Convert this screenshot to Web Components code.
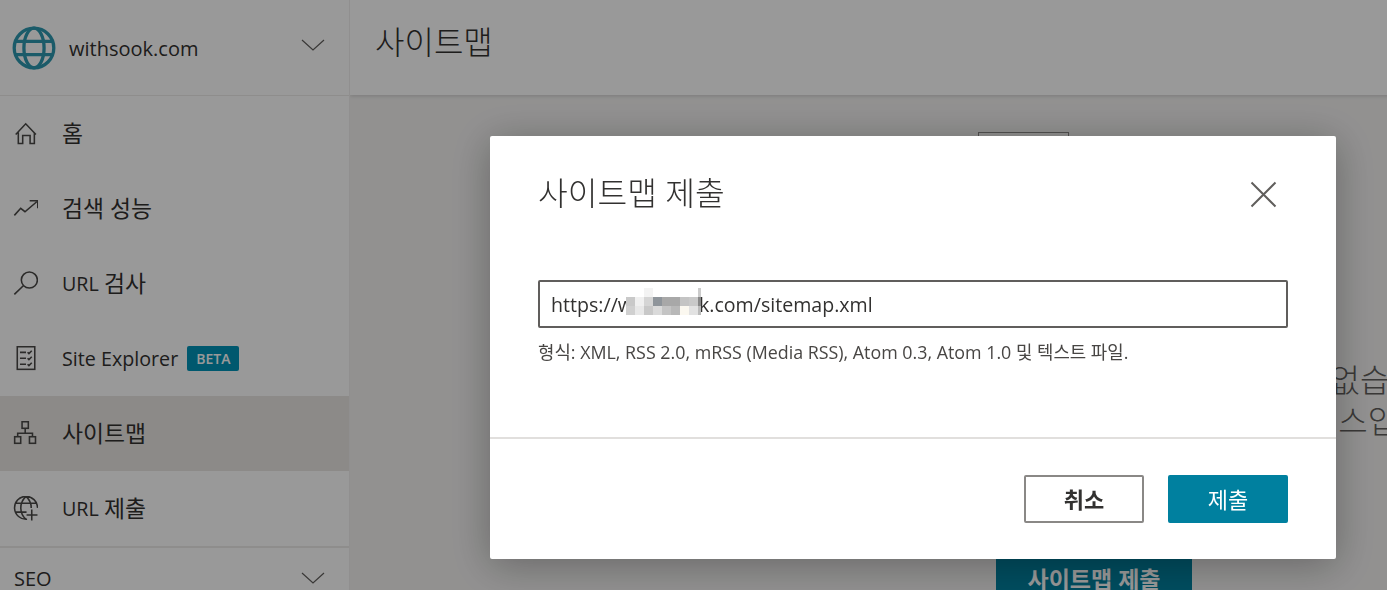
<!DOCTYPE html>
<html lang="ko">
<head>
<meta charset="utf-8">
<title>사이트맵</title>
<style>
    html, body { margin: 0; height: 100%; overflow: hidden; background: #fff; }
    body { font-family: "Open Sans", "Noto Sans CJK KR", sans-serif; color: #323130; }
</style>
</head>
<body>
<app-shell>
    <site-nav slot="nav">
        <nav-item icon="home"><ko-text>홈</ko-text></nav-item>
        <nav-item icon="trend"><ko-text>검색 성능</ko-text></nav-item>
        <nav-item icon="search">URL&nbsp;<ko-text>검사</ko-text></nav-item>
        <nav-item icon="list">Site Explorer<beta-badge>BETA</beta-badge></nav-item>
        <nav-item icon="tree" selected><ko-text>사이트맵</ko-text></nav-item>
        <nav-item icon="globe">URL&nbsp;<ko-text>제출</ko-text></nav-item>
    </site-nav>
    <sitemap-page slot="main"></sitemap-page>
</app-shell>
<submit-dialog></submit-dialog>

<script>
const ICONS = {
    home: '<path d="M2.600 13 12.200 2.700 22 13M5.100 11V21.600H9.300V14H16.400V21.600H20.500V11"/>',
    trend: '<path d="M1.300 18.600 7.400 11.800 11.500 15.100 22.800 5.500M16 4.500H23.800V11.800"/>',
    search: '<circle cx="15.700" cy="8.700" r="7.700"/><path d="M9.900 14.100 1.300 22.400"/>',
    list: '<rect x="4.100" y="0.700" width="16.800" height="21.700"/><path d="M6.700 6.100H12.500M6.700 11.800H12.500M6.700 17.600H12.500M14 6l1.300 1.300L18 4.600M14 11.700l1.300 1.300L18 10.300M14 17.500l1.300 1.300L18 16.100"/>',
    tree: '<rect x="8.700" y="0.700" width="6" height="6.300"/><rect x="1.600" y="15.100" width="5.800" height="6.300"/><rect x="15.800" y="15.100" width="5.800" height="6.300"/><path d="M11.700 7V11.800M4.500 15.100V11.800H18.700V15.100"/>',
    globe: '<path d="M13.500 22.300A11 11 0 1 1 23.500 11.400M12.500 0.400C8.500 4 7.500 8 7.500 11.400S8.500 19 12.500 22.400M12.500 0.400C16.500 4 17.500 8 17.500 11.400M2.500 7H22.500M2.500 15.500H13M13 18.300H23.500M18 13V23.500"/>'
};

class AppShell extends HTMLElement {
    constructor() {
        super();
        this.attachShadow({ mode: 'open' });
    }

    connectedCallback() {
        this.shadowRoot.innerHTML = `
            <style>
                :host { display: flex; height: 100vh; overflow: hidden; }
            </style>
            <slot name="nav"></slot>
            <slot name="main"></slot>
        `;
    }
}

// Korean runs sit a little larger than the latin text around them
class KoText extends HTMLElement {
    constructor() {
        super();
        this.attachShadow({ mode: 'open' });
    }

    connectedCallback() {
        this.shadowRoot.innerHTML = `
            <style>
                :host { display: block; margin-top: -3px; font-size: 1.16em; }
            </style>
            <slot></slot>
        `;
    }
}

class SiteNav extends HTMLElement {
    constructor() {
        super();
        this.attachShadow({ mode: 'open' });
    }

    connectedCallback() {
        this.shadowRoot.innerHTML = `
            <style>
                :host {
                    display: block;
                    flex: 0 0 349px;
                    height: 100vh;
                    overflow: hidden;
                    border-right: 1px solid #f0efee;
                }
                .site {
                    display: flex;
                    align-items: center;
                    box-sizing: border-box;
                    height: 96px;
                    padding: 0 24px 0 12px;
                    border-bottom: 1px solid #edebe9;
                    font-size: 20px;
                }
                .site .logo {
                    width: 44px;
                    height: 44px;
                    margin-right: 13px;
                    fill: none;
                    stroke: #2d98b0;
                    stroke-width: 1.800;
                }
                .site .name { flex: 1; position: relative; top: 1px; }
                .site .chev { margin-bottom: 5px; }
                .chev {
                    width: 24px;
                    height: 14px;
                    fill: none;
                    stroke: #605e5c;
                    stroke-width: 1.200;
                }
                .group {
                    display: flex;
                    align-items: center;
                    justify-content: space-between;
                    height: 60px;
                    padding: 0 24px 0 14px;
                    border-top: 2px solid #edebe9;
                    font-size: 20px;
                }
            </style>
            <div class="site">
                <svg class="logo" viewBox="0 0 24 24">
                    <circle cx="12" cy="12" r="10.800"/>
                    <ellipse cx="12" cy="12" rx="5.500" ry="10.800"/>
                    <path d="M2 8.400H22M2 15.600H22"/>
                </svg>
                <span class="name">withsook.com</span>
                <svg class="chev" viewBox="0 0 24 14"><path d="M1 2 12 12 23 2"/></svg>
            </div>
            <slot></slot>
            <div class="group">
                <span>SEO</span>
                <svg class="chev" viewBox="0 0 24 14"><path d="M1 2 12 12 23 2"/></svg>
            </div>
        `;
    }
}

class NavItem extends HTMLElement {
    constructor() {
        super();
        this.attachShadow({ mode: 'open' });
    }

    connectedCallback() {
        const icon = ICONS[this.getAttribute('icon')];
        this.shadowRoot.innerHTML = `
            <style>
                :host {
                    display: flex;
                    align-items: center;
                    height: 75px;
                    padding-left: 13px;
                    font-size: 19.700px;
                }
                :host([selected]) { background: #e9e7e3; }
                svg {
                    flex: none;
                    width: 25px;
                    height: 25px;
                    margin-right: 24px;
                    fill: none;
                    stroke: #4a4947;
                    stroke-width: 1.500;
                }
                span { display: flex; align-items: center; }
            </style>
            <svg viewBox="0 0 24 24">${icon}</svg>
            <span><slot></slot></span>
        `;
    }
}

class BetaBadge extends HTMLElement {
    constructor() {
        super();
        this.attachShadow({ mode: 'open' });
    }

    connectedCallback() {
        this.shadowRoot.innerHTML = `
            <style>
                :host {
                    display: inline-block;
                    margin-left: 9px;
                    padding: 0 9px;
                    line-height: 25px;
                    height: 25px;
                    border-radius: 2px;
                    background: #0093b7;
                    color: #fff;
                    font-size: 14px;
                    font-weight: 600;
                }
            </style>
            <slot></slot>
        `;
    }
}

class SitemapPage extends HTMLElement {
    constructor() {
        super();
        this.attachShadow({ mode: 'open' });
    }

    connectedCallback() {
        this.shadowRoot.innerHTML = `
            <style>
                :host {
                    display: block;
                    flex: 0 0 1488px;
                    height: 100vh;
                    overflow: hidden;
                    background: #f3f2f1;
                }
                header {
                    height: 95px;
                    padding-left: 25px;
                    background: #fff;
                    box-shadow: 0 1px 4px rgba(0,0,0,0.16);
                    font-size: 32px;
                    font-weight: 300;
                    line-height: 84px;
                }
                .empty {
                    display: flex;
                    flex-direction: column;
                    align-items: center;
                    padding-top: 37px;
                }
                .art {
                    width: 89px;
                    height: 200px;
                    margin-right: 142px;
                    border: 1px solid #8a8886;
                }
                .msg {
                    width: 724px;
                    margin-top: 25px;
                    text-align: right;
                    font-size: 32px;
                    font-weight: 300;
                    line-height: 41px;
                    color: #605e5c;
                }
                .cta {
                    width: 196px;
                    height: 48px;
                    margin-top: 114px;
                    background: #00809f;
                    color: #fff;
                    font-size: 23px;
                    font-weight: 700;
                    line-height: 48px;
                    text-align: center;
                }
            </style>
            <header>사이트맵</header>
            <div class="empty">
                <div class="art"></div>
                <div class="msg">사이트맵이 없습니다.<br>서비스입니다</div>
                <div class="cta">사이트맵 제출</div>
            </div>
        `;
    }
}

class PixelMosaic extends HTMLElement {
    constructor() {
        super();
        this.attachShadow({ mode: 'open' });
    }

    connectedCallback() {
        const rows = [
            ['#fff', '#fff', '#f3f3f3', '#fff', '#fff', '#fff', '#fff', '#fff', '#ccc'],
            ['#c9c9c9', '#f0f0f0', '#d5d5d5', '#8f959b', '#a8a8a8', '#a8a8a8', '#c4c4c4', '#c9c9c9', '#888'],
            ['#d0d0d0', '#e8e8e8', '#c8c8c8', '#dadada', '#c4c4c4', '#b8b8b8', '#fbf8f0', '#e2e2e2', '#bbb']
        ];
        const tiles = rows.flat().map(c => `<i style="background:${c}"></i>`).join('');
        this.shadowRoot.innerHTML = `
            <style>
                :host {
                    position: absolute;
                    left: 86px;
                    top: 6px;
                    display: grid;
                    grid-template-columns: repeat(8, 9px) 3px;
                    grid-auto-rows: 9px;
                }
            </style>
            ${tiles}
        `;
    }
}

class SubmitDialog extends HTMLElement {
    constructor() {
        super();
        this.attachShadow({ mode: 'open' });
    }

    connectedCallback() {
        this.shadowRoot.innerHTML = `
            <style>
                :host {
                    position: fixed;
                    inset: 0;
                    background: rgba(0,0,0,0.4);
                    display: block;
                }
                .dialog {
                    position: absolute;
                    left: 490px;
                    top: 136px;
                    width: 846px;
                    height: 423px;
                    display: flex;
                    flex-direction: column;
                    background: #fff;
                    border-radius: 2px;
                    box-shadow: 0 6px 40px rgba(0,0,0,0.3);
                }
                .head {
                    display: flex;
                    align-items: center;
                    justify-content: space-between;
                    box-sizing: border-box;
                    height: 116px;
                    padding: 0 59px 0 48px;
                }
                .head span {
                    font-size: 32.300px;
                    font-weight: 300;
                    margin-top: -6px;
                }
                .head svg {
                    width: 27px;
                    height: 27px;
                    fill: none;
                    stroke: #605e5c;
                    stroke-width: 2;
                }
                .body { flex: 1; padding: 28px 48px 0; }
                .field {
                    position: relative;
                    height: 44px;
                    padding-left: 11px;
                    border: 2px solid #605e5c;
                    border-radius: 2px;
                    font-size: 19.600px;
                    line-height: 46px;
                }
                .field .masked { letter-spacing: 1.300px; }
                .hint {
                    margin-top: 12px;
                    font-size: 17.850px;
                    line-height: 24px;
                    color: #484644;
                }
                .foot {
                    display: flex;
                    justify-content: flex-end;
                    gap: 24px;
                    padding: 36px 48px;
                    border-top: 2px solid #e1dfdd;
                }
                .btn {
                    width: 116px;
                    height: 44px;
                    border: 2px solid #8a8886;
                    border-radius: 2px;
                    font-size: 22px;
                    font-weight: 700;
                    line-height: 44px;
                    text-align: center;
                }
                .btn.primary {
                    border-color: #00809f;
                    background: #00809f;
                    color: #fff;
                    font-weight: 400;
                }
            </style>
            <div class="dialog">
                <div class="head">
                    <span>사이트맵 제출</span>
                    <svg viewBox="0 0 27 27"><path d="M1.500 1.500 25.500 25.500M25.500 1.500 1.500 25.500"/></svg>
                </div>
                <div class="body">
                    <div class="field">https://<span class="masked">withsoo</span>k.com/sitemap.xml<pixel-mosaic></pixel-mosaic></div>
                    <div class="hint">형식: XML, RSS 2.0, mRSS (Media RSS), Atom 0.3, Atom 1.0 및 텍스트 파일.</div>
                </div>
                <div class="foot">
                    <div class="btn">취소</div>
                    <div class="btn primary">제출</div>
                </div>
            </div>
        `;
    }
}

customElements.define('app-shell', AppShell);
customElements.define('ko-text', KoText);
customElements.define('site-nav', SiteNav);
customElements.define('nav-item', NavItem);
customElements.define('beta-badge', BetaBadge);
customElements.define('sitemap-page', SitemapPage);
customElements.define('pixel-mosaic', PixelMosaic);
customElements.define('submit-dialog', SubmitDialog);
</script>
</body>
</html>
